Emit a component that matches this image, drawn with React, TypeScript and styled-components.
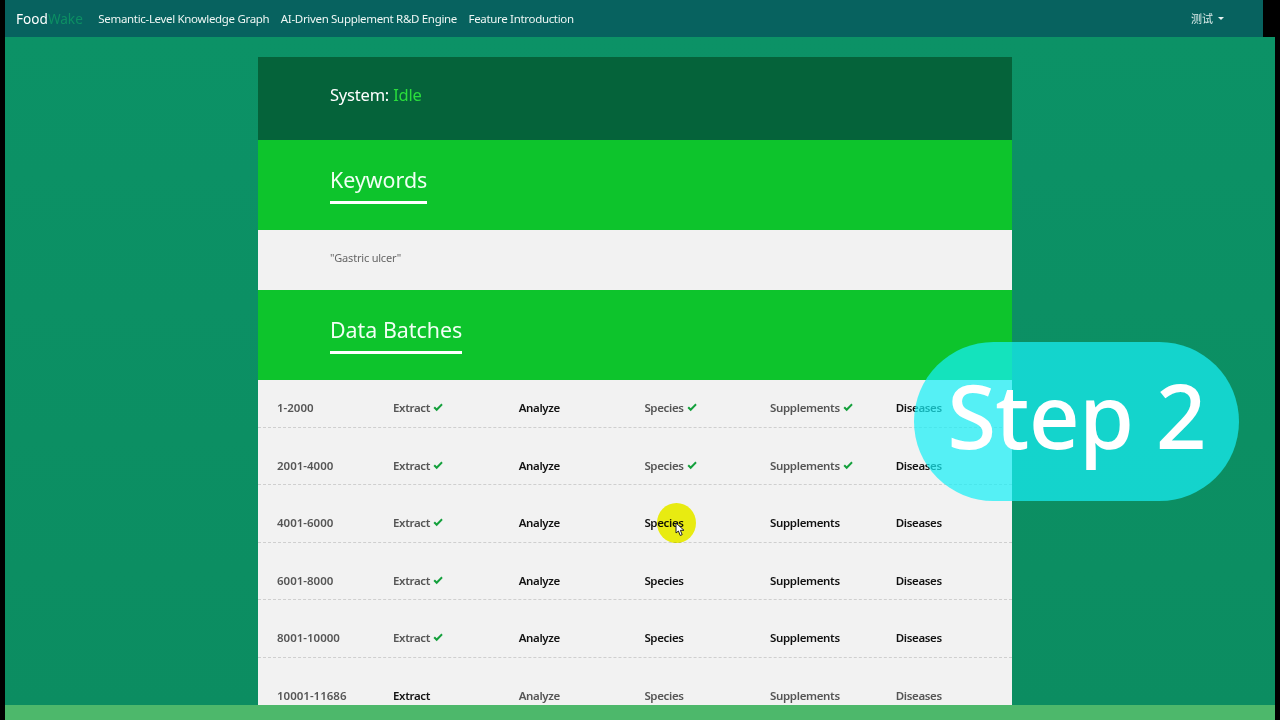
import React from "react";
import styled, { createGlobalStyle } from "styled-components";

const Global = createGlobalStyle`
  html, body { margin: 0; padding: 0; height: 100%; background: #000; }
  #root { height: 100%; }
  * { box-sizing: border-box; }
`;

const Frame = styled.div`
  position: relative;
  width: 1280px;
  height: 720px;
  padding: 0 5px;
  background: #000;
  display: flex;
  flex-direction: column;
  overflow: hidden;
  font-family: "Noto Sans", "Noto Sans CJK SC", sans-serif;
`;
const Page = styled.div`
  flex: 1;
  min-height: 0;
  overflow: hidden;
  background: linear-gradient(180deg, #0c9266 0%, #0c8d61 100%);
`;
const Nav = styled.nav`
  height: 37px;
  margin-right: 12px;
  padding: 0 0 1px 11px;
  background: #07625f;
  display: flex;
  align-items: center;
  color: #eef6f4;
  font-size: 11.5px;
  letter-spacing: -0.32px;
`;
const Brand = styled.span`
  font-size: 13.6px;
  letter-spacing: 0;
  color: #fff;
  margin-right: 15.500px;
  & > span { color: #0c8f63; }
`;
const NavLink = styled.span`
  margin-right: 11.500px;
`;
const UserMenu = styled.span`
  margin-left: auto;
  margin-right: 39px;
  display: flex;
  align-items: center;
  gap: 5px;
  font-size: 11px;
  letter-spacing: 0;
  color: #dcecea;
`;
const Caret = styled.i`
  width: 0;
  height: 0;
  border-left: 3px solid transparent;
  border-right: 3px solid transparent;
  border-top: 3px solid #e8f2f0;
`;
const Column = styled.main`
  width: 754px;
  margin: 20px 0 0 253px;
`;
const StatusBand = styled.section`
  height: 83px;
  background: #05633a;
  padding: 25px 0 0 72px;
  font-size: 16.5px;
  letter-spacing: -0.2px;
  line-height: 26px;
  color: #fff;
  & > span { color: #2ade3c; }
`;
const TitleBand = styled.section`
  height: 90px;
  background: #0dc42c;
  padding: 25px 0 0 72px;
`;
const Title = styled.h2`
  display: inline-block;
  margin: 0;
  font-size: 21.4px;
  font-weight: 400;
  line-height: 30px;
  padding-bottom: 6px;
  color: #f0fff4;
  border-bottom: 3px solid #fff;
`;
const KeywordBand = styled.section`
  height: 60px;
  background: #f2f2f2;
  padding: 0 0 6px 72px;
  display: flex;
  align-items: center;
  font-size: 11px;
  letter-spacing: -0.2px;
  color: #666;
`;
const Rows = styled.section`
  background: #f2f2f2;
`;
const Row = styled.div`
  height: 57.6px;
  padding: 0 0 10.500px 19px;
  display: grid;
  grid-template-columns: 116px repeat(5, 125.7px);
  align-items: end;
  border-bottom: 1px dashed #cfcfcf;
  font-size: 11.5px;
  line-height: 17px;
  letter-spacing: -0.35px;
  font-weight: 600;
  &:first-child { height: 47.6px; }
`;
const Cell = styled.span<{ $done?: boolean }>`
  display: flex;
  align-items: center;
  gap: 3px;
  color: ${(p) => (p.$done ? "#555" : "#111")};
`;
const Batch = styled.span`
  color: #555;
  letter-spacing: 0;
`;
const Footer = styled.footer`
  flex: none;
  height: 15px;
  background: #4db86b;
`;
const Pill = styled.div`
  position: absolute;
  left: 914px;
  top: 342px;
  width: 325px;
  height: 159px;
  border-radius: 80px;
  background: rgba(23, 239, 245, 0.72);
  color: #fff;
  font-size: 89px;
  font-weight: 500;
  letter-spacing: -0.8px;
  line-height: 145px;
  text-align: center;
`;
const Halo = styled.div`
  position: absolute;
  left: 657px;
  top: 503px;
  width: 39px;
  height: 40px;
  border-radius: 50%;
  background: #f5f811;
  mix-blend-mode: multiply;
`;
const Cursor = styled.svg`
  position: absolute;
  left: 675px;
  top: 522px;
`;

const Check = () => (
  <svg width="10" height="9" viewBox="0 0 10 9">
    <path d="M.5 4.900 1.900 3.500 3.700 5.300 8.400.6 9.700 1.900 3.700 8.200Z" fill="#14a03c" />
  </svg>
);

type Item = [string, boolean];
const rows: { label: string; cells: Item[] }[] = [
  { label: "1-2000", cells: [["Extract", true], ["Analyze", false], ["Species", true], ["Supplements", true], ["Diseases", false]] },
  { label: "2001-4000", cells: [["Extract", true], ["Analyze", false], ["Species", true], ["Supplements", true], ["Diseases", false]] },
  { label: "4001-6000", cells: [["Extract", true], ["Analyze", false], ["Species", false], ["Supplements", false], ["Diseases", false]] },
  { label: "6001-8000", cells: [["Extract", true], ["Analyze", false], ["Species", false], ["Supplements", false], ["Diseases", false]] },
  { label: "8001-10000", cells: [["Extract", true], ["Analyze", false], ["Species", false], ["Supplements", false], ["Diseases", false]] },
];

export default function App() {
  return (
    <Frame>
      <Global />
      <Nav>
        <Brand>Food<span>Wake</span></Brand>
        <NavLink>Semantic-Level Knowledge Graph</NavLink>
        <NavLink>AI-Driven Supplement R&amp;D Engine</NavLink>
        <NavLink>Feature Introduction</NavLink>
        <UserMenu>测试 <Caret /></UserMenu>
      </Nav>
      <Page>
        <Column>
          <StatusBand>System: <span>Idle</span></StatusBand>
          <TitleBand><Title>Keywords</Title></TitleBand>
          <KeywordBand>"Gastric ulcer"</KeywordBand>
          <TitleBand><Title>Data Batches</Title></TitleBand>
          <Rows>
            {rows.map((r) => (
              <Row key={r.label}>
                <Batch>{r.label}</Batch>
                {r.cells.map(([name, done]) => (
                  <Cell key={name} $done={done}>
                    {name}
                    {done && <Check />}
                  </Cell>
                ))}
              </Row>
            ))}
            <Row>
              <Batch>10001-11686</Batch>
              <Cell>Extract</Cell>
              <Cell $done>Analyze</Cell>
              <Cell $done>Species</Cell>
              <Cell $done>Supplements</Cell>
              <Cell $done>Diseases</Cell>
            </Row>
          </Rows>
        </Column>
      </Page>
      <Footer />
      <Halo />
      <Cursor width="11" height="16" viewBox="0 0 11 16">
        <path d="M1 1v10l2.400-2 1.800 4.500 2-.8L5.400 8.300H9Z" fill="#fff" stroke="#222" strokeWidth="1" />
      </Cursor>
      <Pill>Step 2</Pill>
    </Frame>
  );
}
